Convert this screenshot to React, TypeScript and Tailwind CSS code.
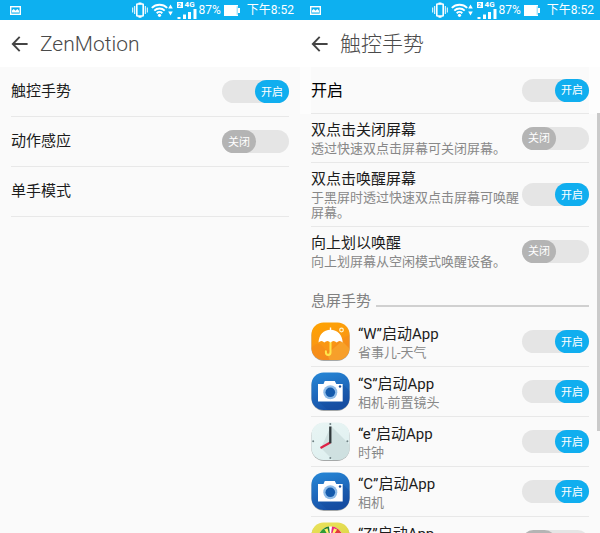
import React, { useId, useState } from 'react';

type IconName = 'weather' | 'camera' | 'clock' | 'gallery';

interface SettingProps {
  title: string;
  note?: string;
  on?: boolean;
}

const motionSettings: SettingProps[] = [
  { title: '触控手势', on: true },
  { title: '动作感应', on: false },
  { title: '单手模式' },
];

const tapSettings: SettingProps[] = [
  { title: '双点击关闭屏幕', note: '透过快速双点击屏幕可关闭屏幕。', on: false },
  { title: '双点击唤醒屏幕', note: '于黑屏时透过快速双点击屏幕可唤醒屏幕。', on: true },
  { title: '向上划以唤醒', note: '向上划屏幕从空闲模式唤醒设备。', on: false },
];

const appGestures: { title: string; note?: string; icon: IconName; on: boolean }[] = [
  { title: '“W”启动App', note: '省事儿-天气', icon: 'weather', on: true },
  { title: '“S”启动App', note: '相机-前置镜头', icon: 'camera', on: true },
  { title: '“e”启动App', note: '时钟', icon: 'clock', on: true },
  { title: '“C”启动App', note: '相机', icon: 'camera', on: true },
  { title: '“Z”启动App', icon: 'gallery', on: false },
];

const Toggle: React.FC<{ initial: boolean; labelledBy: string }> = ({ initial, labelledBy }) => {
  const [on, setOn] = useState(initial);
  return (
    <button
      type="button"
      role="switch"
      aria-checked={on}
      aria-labelledby={labelledBy}
      onClick={() => setOn(!on)}
      className={`flex h-[23px] w-[67px] shrink-0 rounded-full bg-[#e5e5e5] ${on ? 'justify-end' : 'justify-start'}`}
    >
      <span
        className={`flex h-full w-[34px] items-center justify-center rounded-full pt-px text-[11px] leading-none text-white ${on ? 'bg-[#10aeef]' : 'bg-[#b4b4b4]'}`}
      >
        {on ? '开启' : '关闭'}
      </span>
    </button>
  );
};

const StatusBar: React.FC = () => (
  <div className="flex h-5 items-center bg-[#0db0f0] pr-[6px] pl-[10px] text-white">
    <svg className="h-[9px] w-[11px]" viewBox="0 0 11 9" fill="none">
      <rect x="0.7" y="0.7" width="9.6" height="7.6" stroke="currentColor" strokeWidth="1.4" />
      <path d="M2 6.6V4.6L3.8 3l1.7 1.7L7.3 3 9 4.8v1.8z" fill="#fff" />
    </svg>
    <svg className="ml-auto h-4 w-4" viewBox="0 0 16 16" fill="none" stroke="currentColor">
      <rect x="4.8" y="2" width="6.4" height="12" rx="0.6" strokeWidth="1.6" />
      <path d="M6.5 1.4h3M6.5 14.8h3" strokeWidth="1.8" />
      <path d="M2.7 4v8M13.3 4v8M0.7 5.5v5M15.3 5.5v5" strokeWidth="1" />
    </svg>
    <svg className="ml-[3px] h-[14px] w-[17px]" viewBox="0 0 17 14" fill="none" stroke="currentColor" strokeWidth="1.9">
      <path d="M0.8 4.9a11 11 0 0 1 15.4 0M3.3 7.6a7.4 7.4 0 0 1 10.4 0M5.7 10.2a4 4 0 0 1 5.6 0" />
      <circle cx="8.5" cy="12.3" r="1.6" fill="currentColor" stroke="none" />
    </svg>
    <svg className="h-3 w-[5px]" viewBox="0 0 5 12" fill="currentColor">
      <path d="M2.5 0.5L4.8 4.4H0.2zM2.5 11.5L0.2 7.6h4.6z" />
    </svg>
    <div className="ml-1 flex h-5 flex-col justify-between pt-px pb-px">
      <div className="flex items-center gap-[2px] text-[8px] leading-[7px] font-bold">
        <span className="flex h-[6px] w-[6px] items-center justify-center bg-white text-[6px] leading-none text-[#0db0f0]">2</span>
        4G
      </div>
      <svg className="h-[10px] w-5" viewBox="0 0 20 10" fill="currentColor">
        <path d="M0.5 8h3v2h-3zM6 5.5h3V10H6zM11 3h3v7h-3zM16.5 0h3v10h-3z" />
      </svg>
    </div>
    <span className="ml-[2px] text-[12px] leading-5">87%</span>
    <svg className="ml-[3px] h-[11px] w-4" viewBox="0 0 16 11" fill="currentColor">
      <path d="M0 0h14v3h2v5h-2v3H0z" />
      <path d="M13.2 1.2v8.6" stroke="#7fd4f7" strokeWidth="1" />
    </svg>
    <span className="ml-[7px] text-[12px] leading-5">下午8:52</span>
  </div>
);

const Header: React.FC<{ title: string; className: string }> = ({ title, className }) => (
  <header className="flex h-[47px] items-center gap-3 bg-white px-[11px] text-[#4a4a4a]">
    <button type="button" aria-label="返回">
      <svg className="block h-4 w-[17px]" viewBox="0 0 17 16" fill="none" stroke="#444" strokeWidth="1.9">
        <path d="M8.7 0.9L1.8 8l6.9 7.1M2 8h14.6" />
      </svg>
    </button>
    <h1 className={className}>{title}</h1>
  </header>
);

const AppIcon: React.FC<{ name: IconName }> = ({ name }) => {
  const id = useId();
  const colors = {
    weather: ['#ffa400', '#f78f1e'],
    camera: ['#2789d8', '#1752a8'],
    clock: ['#e9f5f4', '#dff0f0'],
    gallery: ['#ebe35c', '#d5cf3b'],
  }[name];
  return (
    <svg className="h-[39px] w-[39px] shrink-0" viewBox="0 0 39 39" fill="none">
      <defs>
        <linearGradient id={`${id}g`} x1="0" y1="0" x2="0.3" y2="1">
          <stop stopColor={colors[0]} />
          <stop offset="1" stopColor={colors[1]} />
        </linearGradient>
        <clipPath id={`${id}c`}>
          <rect x="0.5" y="0.5" width="38" height="37.5" rx="12" />
        </clipPath>
      </defs>
      <rect x="0.4" y="1" width="38.2" height="38" rx="12.5" fill="#a5a8a8" />
      <g clipPath={`url(#${id}c)`}>
        <rect width="39" height="39" fill={`url(#${id}g)`} />
        {name === 'weather' && (
          <>
            <path d="M0 26q8-8 12-1t11-1 16-11v26H0z" fill="#ef8120" opacity="0.3" />
            <path d="M31 19l8 8v12H19l-3-7z" fill="#f9b338" opacity="0.5" />
            <path d="M19.5 20v10.5c0 3.3-4.6 3.3-4.6 0v-1.2" stroke="#ffe64b" strokeWidth="2" strokeLinecap="round" />
            <path d="M19.5 5.5v3" stroke="#fff" strokeWidth="1.4" />
            <path d="M7.5 20.6C7.9 12.5 12.5 7.7 19.5 7.7s11.8 4.8 12.2 12.9c-2-2-4.2-2-6 0-2.1-2-4.2-2-6.2 0-2-2-4.2-2-6.2 0-1.8-2-3.9-2-5.8 0z" fill="#fff" />
            <circle cx="30.5" cy="8" r="1.8" stroke="#fff4c8" strokeWidth="1.2" />
          </>
        )}
        {name === 'camera' && (
          <>
            <path d="M31.7 12l8 8v19H18l-10-9z" fill="#103f91" opacity="0.25" />
            <path d="M7 12h5.5l1.3-3h10l1.5 3h6.4v17.5H7z" fill="#fff" />
            <circle cx="19.3" cy="20.3" r="7" fill="#8fbce8" />
            <circle cx="19.3" cy="20.3" r="4.8" fill="#145bad" />
            <circle cx="29" cy="14.5" r="1.2" fill="#184e9b" />
          </>
        )}
        {name === 'clock' && (
          <>
            <path d="M20 4l19 19v16H23L10 26z" fill="#c3d5d5" opacity="0.6" />
            <path d="M19.3 20.5L9.5 26" stroke="#df2146" strokeWidth="2.2" />
            <path d="M19.3 21.3V4.5" stroke="#30383a" strokeWidth="2.3" />
            <circle cx="19.3" cy="2" r="1" fill="#708184" />
            <circle cx="19.3" cy="36" r="1" fill="#708184" />
            <circle cx="2.2" cy="19.2" r="1" fill="#708184" />
            <circle cx="36.4" cy="19.2" r="1" fill="#708184" />
          </>
        )}
        {name === 'gallery' && (
          <>
            <circle cx="19.5" cy="17" r="12.5" fill="#fff" />
            <path d="M19.5 17L7.5 13.5A12.5 12.5 0 0 1 13 6.3z" fill="#2f9d35" />
            <path d="M19.5 17L13 6.3a12.5 12.5 0 0 1 5-1.7z" fill="#1f7a33" />
            <path d="M19.5 17L21 4.6a12.5 12.5 0 0 1 5 1.7z" fill="#e8247c" />
            <path d="M19.5 17L26 6.3a12.5 12.5 0 0 1 5.5 7.2z" fill="#e33b3b" />
            <path d="M19.5 17l-6-9.5 3-1.3zM19.5 17l3.5-10.800 3 1.600z" fill="#fff36a" />
          </>
        )}
      </g>
    </svg>
  );
};

const MotionRow: React.FC<SettingProps> = ({ title, on }) => {
  const id = useId();
  return (
    <li className="flex h-[50px] items-center justify-between border-b border-[#e8e8e8]">
      <span id={id} className="text-[15px] leading-[21px]">{title}</span>
      {on !== undefined && <Toggle initial={on} labelledBy={id} />}
    </li>
  );
};

const TapRow: React.FC<SettingProps> = ({ title, note, on = false }) => {
  const id = useId();
  return (
    <li className="flex items-center border-b border-[#e8e8e8] py-[6px] last:border-b-0">
      <div className="min-w-0 flex-1">
        <h2 id={id} className="text-[15px] leading-[21px]">{title}</h2>
        <p className="text-[13px] leading-[15px] text-[#888]">{note}</p>
      </div>
      <Toggle initial={on} labelledBy={id} />
    </li>
  );
};

const AppRow: React.FC<{ title: string; note?: string; icon: IconName; on: boolean }> = ({ title, note, icon, on }) => {
  const id = useId();
  return (
    <li className="flex h-[50px] shrink-0 items-center border-b border-[#e8e8e8]">
      <AppIcon name={icon} />
      <div className="ml-2 h-9 min-w-0 flex-1">
        <h3 id={id} className="text-[15px] leading-[21px]">{title}</h3>
        {note && <p className="text-[13px] leading-[15px] text-[#888]">{note}</p>}
      </div>
      <Toggle initial={on} labelledBy={id} />
    </li>
  );
};

export default function App() {
  return (
    <main className="grid h-screen grid-cols-2 overflow-hidden bg-[#fafafa] font-['Roboto','Noto_Sans_CJK_SC',sans-serif] text-[#1c1c1c]">
      <section className="min-w-0">
        <StatusBar />
        <Header title="ZenMotion" className="text-[21px] leading-7 font-light" />
        <ul className="px-[11px]">
          {motionSettings.map((item) => (
            <MotionRow key={item.title} {...item} />
          ))}
        </ul>
      </section>

      <section className="relative min-w-0">
        <StatusBar />
        <Header title="触控手势" className="text-[21px] leading-7 font-light" />
        <div className="bg-[#fdfdfd] px-[11px]">
          <div className="flex h-[47px] items-center justify-between border-b border-[#e8e8e8] bg-[#fafafa]">
            <h2 id="gesture-main" className="text-[16px] leading-[21px] text-black">开启</h2>
            <Toggle initial labelledBy="gesture-main" />
          </div>
        </div>
        <div className="px-[11px]">
          <ul>
            {tapSettings.map((item) => (
              <TapRow key={item.title} {...item} />
            ))}
          </ul>
          <div className="flex h-[42px] items-end gap-[5px] pb-[6px]">
            <h2 className="text-[15px] leading-5 text-[#808080]">息屏手势</h2>
            <div className="mb-1 h-[2px] flex-1 bg-[#d0d0d0]"></div>
          </div>
          <ul>
            {appGestures.map((item) => (
              <AppRow key={item.title} {...item} />
            ))}
          </ul>
        </div>
        <div className="absolute top-[113px] right-0 h-[318px] w-[3px] bg-[#cacaca]"></div>
      </section>
    </main>
  );
}
